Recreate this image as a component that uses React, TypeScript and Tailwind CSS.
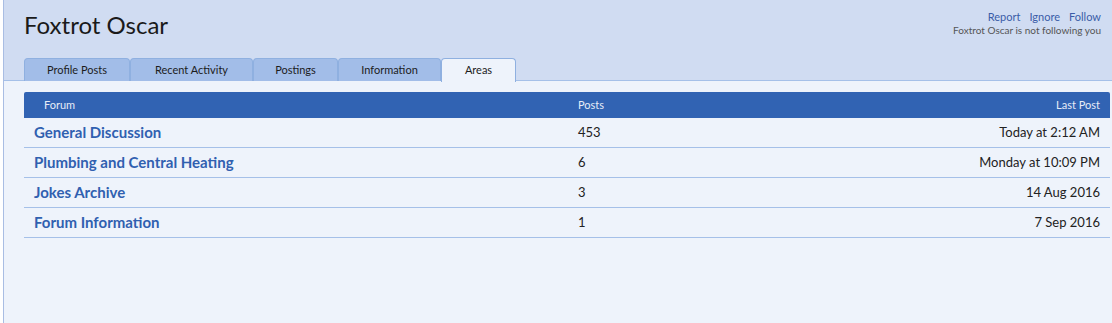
import React from "react";

const tabs = [
  { label: "Profile Posts", w: "w-[106px]" },
  { label: "Recent Activity", w: "w-[123px]" },
  { label: "Postings", w: "w-[85px]" },
  { label: "Information", w: "w-[103px]" },
];

const rows = [
  { title: "General Discussion", posts: "453", last: "Today at 2:12 AM" },
  { title: "Plumbing and Central Heating", posts: "6", last: "Monday at 10:09 PM" },
  { title: "Jokes Archive", posts: "3", last: "14 Aug 2016" },
  { title: "Forum Information", posts: "1", last: "7 Sep 2016" },
];

export default function App() {
  return (
    <div className="h-[323px] w-[1112px] pl-[3px] bg-white font-['Lato','Liberation_Sans',sans-serif]">
      <div className="h-full border-l border-[#a9bde3] bg-[#eef3fb] flex flex-col">
        <div className="bg-[#d0dcf2] border-b border-[#a5c0e8] pl-[20px] pr-[11px]">
          <div className="flex justify-between h-[58px]">
            <h1 className="pt-[10px] text-[24px] leading-[30px] text-[#1a1a1a]">Foxtrot Oscar</h1>
            <div className="pt-[9px] flex flex-col items-end">
              <div className="flex gap-[9px] text-[11px] leading-[15px] text-[#3b5ca8]">
                <a>Report</a>
                <a>Ignore</a>
                <a>Follow</a>
              </div>
              <div className="text-[10px] leading-[12px] text-[#555]">Foxtrot Oscar is not following you</div>
            </div>
          </div>
          <ul className="flex h-[23px] -mb-px">
            {tabs.map((t) => (
              <li
                key={t.label}
                className={`${t.w} h-[23px] flex items-center justify-center rounded-t-[4px] border border-b-0 border-[#8fb0e0] bg-[#a2bde8] text-[11px] text-[#1c1c1c]`}
              >
                {t.label}
              </li>
            ))}
            <li className="w-[75px] h-[24px] flex items-center justify-center rounded-t-[4px] border border-b-0 border-[#8fb0e0] bg-[#eef3fb] text-[11px] text-[#1c1c1c]">
              Areas
            </li>
          </ul>
        </div>
        <div className="pl-[20px] pr-[2px] pt-[11px]">
          <div className="flex h-[26px] items-center bg-[#3163b3] rounded-t-[2px] text-[11px] text-[#e6ecf7]">
            <div className="w-[554px] pl-[20px]">Forum</div>
            <div className="flex-1">Posts</div>
            <div className="pr-[10px]">Last Post</div>
          </div>
          {rows.map((r) => (
            <div key={r.title} className="flex h-[30px] items-center border-b border-[#a5c0e8]">
              <div className="w-[554px] pl-[10px] text-[15px] font-bold text-[#3060b0]">{r.title}</div>
              <div className="flex-1 text-[13px] text-[#222]">{r.posts}</div>
              <div className="pr-[10px] text-[13px] text-[#222]">{r.last}</div>
            </div>
          ))}
        </div>
      </div>
    </div>
  );
}
